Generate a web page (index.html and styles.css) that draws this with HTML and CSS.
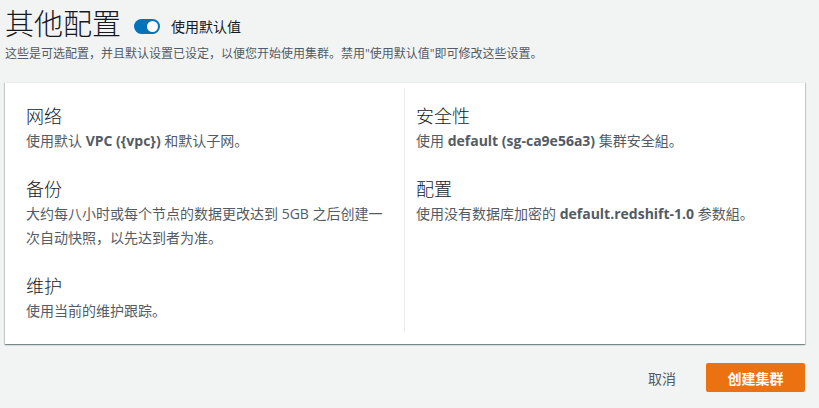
FILE: index.html
```html
<!DOCTYPE html>
<html lang="zh-CN">
<head>
<meta charset="utf-8">
<title>其他配置</title>
<link rel="stylesheet" href="styles.css">
</head>
<body>
<div class="page">
  <div class="header">
    <h1 class="title">其他配置</h1>
    <span class="toggle" role="switch" aria-checked="true"><span class="knob"></span></span>
    <span class="toggle-label">使用默认值</span>
  </div>
  <p class="subtitle">这些是可选配置，并且默认设置已设定，以便您开始使用集群。禁用"使用默认值"即可修改这些设置。</p>

  <div class="card">
    <div class="col col-left">
      <div class="section">
        <h3 class="sec-title">网络</h3>
        <p class="sec-desc">使用默认 <b>VPC ({vpc})</b> 和默认子网。</p>
      </div>
      <div class="section">
        <h3 class="sec-title">备份</h3>
        <p class="sec-desc">大约每八小时或每个节点的数据更改达到 5GB 之后创建一次自动快照，以先达到者为准。</p>
      </div>
      <div class="section">
        <h3 class="sec-title">维护</h3>
        <p class="sec-desc">使用当前的维护跟踪。</p>
      </div>
    </div>
    <div class="col col-right">
      <div class="section">
        <h3 class="sec-title">安全性</h3>
        <p class="sec-desc">使用 <b>default (sg-ca9e56a3)</b> 集群安全組。</p>
      </div>
      <div class="section">
        <h3 class="sec-title">配置</h3>
        <p class="sec-desc">使用没有数据库加密的 <b>default.redshift-1.0</b> 参数組。</p>
      </div>
    </div>
  </div>

  <div class="actions">
    <button class="btn-link">取消</button>
    <button class="btn-primary">创建集群</button>
  </div>
</div>
</body>
</html>
```

FILE: styles.css
```css
* { box-sizing: border-box; }
html, body {
  margin: 0;
  padding: 0;
  background: #f2f3f3;
}
body {
  font-family: "Open Sans", "Noto Sans CJK TC", "Noto Sans CJK SC", sans-serif;
  color: #16191f;
}
.page {
  padding: 6px 14px 0 5px;
}
.header {
  display: flex;
  align-items: center;
  height: 36px;
}
.title {
  margin: 0;
  font-size: 29px;
  font-weight: 300;
  line-height: 36px;
  color: #16191f;
}
.toggle {
  position: relative;
  display: inline-block;
  width: 26px;
  height: 15px;
  border-radius: 8px;
  background: #0073bb;
  margin-left: 13px;
  margin-top: 4px;
}
.knob {
  position: absolute;
  top: 2px;
  right: 2px;
  width: 11px;
  height: 11px;
  border-radius: 50%;
  background: #fff;
}
.toggle-label {
  margin-left: 11px;
  margin-top: 4px;
  font-size: 14px;
  color: #16191f;
}
.subtitle {
  margin: 2px 0 0;
  font-size: 12px;
  line-height: 20px;
  color: #545b64;
}
.card {
  margin-top: 18px;
  background: #fff;
  border-top: 1px solid #eaeded;
  box-shadow: 0 1px 1px 0 rgba(0, 28, 36, 0.3), 1px 1px 1px 0 rgba(0, 28, 36, 0.15), -1px 1px 1px 0 rgba(0, 28, 36, 0.15);
  padding: 5px 0 11px;
  display: grid;
  grid-template-columns: 399px 1fr;
}
.col {
  padding: 16px 0 10px;
}
.col-left {
  padding-left: 21px;
  padding-right: 16px;
}
.col-right {
  border-left: 1px solid #eaeded;
  padding-left: 11px;
  padding-right: 20px;
}
.section + .section {
  margin-top: 24px;
}
.sec-title {
  margin: 0;
  font-size: 18px;
  font-weight: 300;
  line-height: 24px;
  color: #16191f;
}
.sec-desc {
  margin: 1px 0 0;
  font-size: 14px;
  line-height: 24px;
  color: #545b64;
}
.sec-desc b {
  font-weight: 700;
  color: #545b64;
}
.actions {
  display: flex;
  justify-content: flex-end;
  align-items: center;
  gap: 10px;
  margin-top: 19px;
}
.btn-link {
  background: none;
  border: none;
  padding: 4px 20px;
  font-family: inherit;
  font-size: 14px;
  color: #545b64;
  cursor: pointer;
}
.btn-primary {
  background: #ec7211;
  border: none;
  border-radius: 2px;
  width: 99px;
  height: 29px;
  font-family: inherit;
  font-size: 14px;
  font-weight: 700;
  color: #fff;
  cursor: pointer;
}
```
